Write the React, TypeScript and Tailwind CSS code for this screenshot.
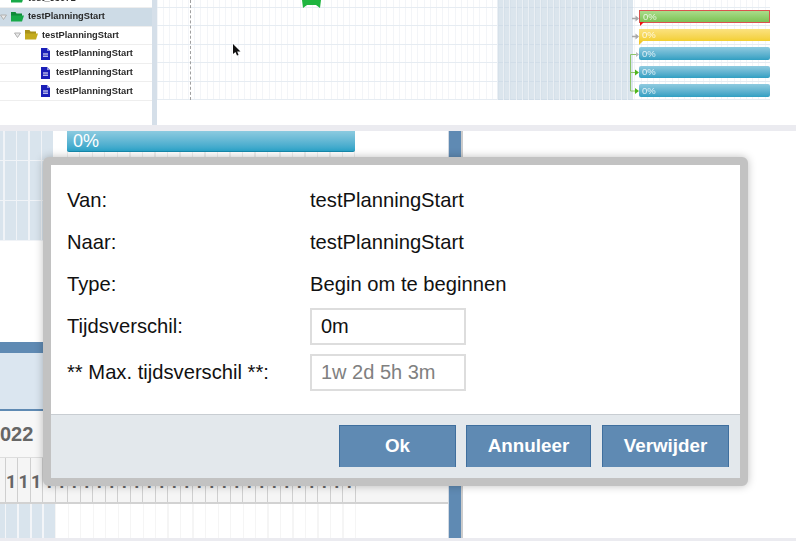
import React from "react";

const ganttBars = [
  { cls: "bg-gradient-to-b from-[#a9dc8a] to-[#7cc253] border border-[#d9534f]", flag: "border-t-[#f01010]" },
  { cls: "bg-gradient-to-b from-[#fbe27e] to-[#f3cf2e]", flag: "border-t-[#f3c52a]" },
  { cls: "bg-gradient-to-b from-[#8fcbe0] to-[#2f9fc2] rounded-[2px]", flag: "" },
  { cls: "bg-gradient-to-b from-[#8fcbe0] to-[#2f9fc2] rounded-[2px]", flag: "" },
  { cls: "bg-gradient-to-b from-[#8fcbe0] to-[#2f9fc2] rounded-[2px]", flag: "" },
];

function Caret() {
  return (
    <svg width="7" height="6" viewBox="0 0 7 6" className="shrink-0">
      <path d="M.5 1h6L3.500 5.500z" fill="#e8e8e8" stroke="#b0b0b0" strokeWidth="1" />
    </svg>
  );
}

function FolderOpen({ color, dark }: { color: string; dark: string }) {
  return (
    <svg width="13" height="10" viewBox="0 0 13 10" className="shrink-0">
      <path d="M0 0h4.500l1 1.500H11V4H0z" fill={dark} />
      <path d="M0 9.500V3.500h13L11 9.500z" fill={color} />
    </svg>
  );
}

function DocIcon() {
  return (
    <svg width="9" height="12" viewBox="0 0 9 12" className="mr-[2px] shrink-0">
      <path d="M0 0h6l3 3v9H0z" fill="#1a1fb8" />
      <path d="M6 0l3 3H6z" fill="#8f92e0" />
      <path d="M2 6h5M2 8.200h5" stroke="#ffffff" strokeWidth="1" />
    </svg>
  );
}

function TreeRow({
  indent,
  icon,
  selected,
  label = "testPlanningStart",
}: {
  indent: string;
  icon: React.ReactNode;
  selected?: boolean;
  label?: string;
}) {
  return (
    <div
      className={`flex h-[18.6px] items-center gap-[4px] border-b border-[#eeeeee] ${indent} ${
        selected ? "bg-[#cddbe6]" : "bg-white"
      }`}
    >
      {icon}
      <span className="text-[9.3px] font-bold leading-none text-[#2a2a2a]">{label}</span>
    </div>
  );
}

function Tree() {
  return (
    <div className="w-[152px] shrink-0 overflow-hidden bg-white">
      <div className="-mt-[10.6px]">
        <TreeRow
          indent="pl-[11px]"
          icon={<FolderOpen color="#17a948" dark="#0f8a38" />}
          label="test_95071"
        />
        <TreeRow
          indent="pl-0"
          selected
          icon={
            <>
              <Caret />
              <FolderOpen color="#17a948" dark="#0f8a38" />
            </>
          }
        />
        <TreeRow
          indent="pl-[14px]"
          icon={
            <>
              <Caret />
              <FolderOpen color="#c4ab1e" dark="#a9921a" />
            </>
          }
        />
        <TreeRow indent="pl-[41px]" icon={<DocIcon />} />
        <TreeRow indent="pl-[41px]" icon={<DocIcon />} />
        <TreeRow indent="pl-[41px]" icon={<DocIcon />} />
      </div>
    </div>
  );
}

function TopChart() {
  return (
    <div className="relative flex-1 bg-white">
      <div className="relative h-[100px] w-[613px] overflow-hidden bg-[repeating-linear-gradient(90deg,#f3f5f8_0,#f3f5f8_1px,transparent_1px,transparent_6.2px)]">
        <div className="h-[8px] border-b border-[#e6ecf2]" />
        {ganttBars.map((bar, i) => (
          <div key={i} className="relative flex h-[18.4px] items-center border-b border-[#e6ecf2]">
            <div className={`relative z-10 ml-[482px] flex h-[12.5px] w-[131px] items-center pl-[3px] text-[9.500px] leading-none text-white/80 ${bar.cls}`}>
              0%
              {bar.flag && (
                <span className={`absolute -bottom-[4px] left-0 h-0 w-0 border-t-[4px] border-r-[4px] border-r-transparent ${bar.flag}`} />
              )}
            </div>
          </div>
        ))}
        <div className="absolute bottom-0 left-[340px] top-0 w-[136px] bg-[#c3d3e1]/60 bg-[repeating-linear-gradient(90deg,#eaeff4_0,#eaeff4_1px,transparent_1px,transparent_6.2px)]" />
        <div className="absolute bottom-0 left-[33px] top-0 border-l border-dashed border-[#a0a0a0]" />
        <svg className="absolute left-[144px] top-0" width="21" height="9" viewBox="0 0 21 9">
          <path d="M1 0h19l-1 8-4-3H6l-4 3z" fill="#1fb53f" />
        </svg>
        {/* dependency links */}
        <svg className="absolute left-[470px] top-0 z-20" width="14" height="100" viewBox="0 0 14 100" fill="none">
          <path d="M5 18.500h6M5 36.500h6" stroke="#a8a8a8" strokeWidth="1.500" />
          <path d="M8.500 15.500l3.500 3-3.500 3zM8.500 33.500l3.500 3-3.500 3z" fill="#a8a8a8" />
          <path d="M10 54.500H3.500V91H10M3.500 72.500H10" stroke="#8cc56a" strokeWidth="1" />
          <path d="M9 52l3 2.500-3 2.500z" fill="#b8b8b8" />
          <path d="M8 69.500l4 3-4 3zM8 88l4 3-4 3z" fill="#4fb61c" />
        </svg>
        <svg className="absolute left-[76px] top-[44px] z-20" width="8" height="13" viewBox="0 0 8 13">
          <path d="M0 0v10l2.500-2 1.500 3.500 1.500-.6L4.200 7.500H7.500z" fill="#111111" />
        </svg>
      </div>
    </div>
  );
}

function LowerPane() {
  const ticks = Array.from({ length: 28 });
  return (
    <div className="flex w-[448px] shrink-0 flex-col overflow-hidden bg-white">
      {/* bar row of the lower gantt */}
      <div className="flex h-[110px] shrink-0">
        <div className="h-full w-[53px] shrink-0 bg-[#d9e4ed] bg-[repeating-linear-gradient(90deg,#f0f3f7_3px,#f0f3f7_4.500px,transparent_4.500px,transparent_15.500px),repeating-linear-gradient(0deg,#f0f3f7_0,#f0f3f7_1.500px,transparent_1.500px,transparent_40px)]" />
        <div className="ml-[14px] h-[26px] w-[288px] bg-[repeating-linear-gradient(90deg,#eeeeee_0,#eeeeee_1px,transparent_1px,transparent_12.500px)]">
          <div className="flex h-[21px] items-center rounded-b-[2px] border-b border-[#1688ab] bg-gradient-to-b from-[#8ccbe0] to-[#2aa3c8] pl-[6px] text-[18px] leading-none text-white">
            0%
          </div>
        </div>
      </div>
      <div className="h-[101px] shrink-0" />
      <div className="h-[11px] shrink-0 bg-[#5f8ab3]" />
      <div className="h-[58px] shrink-0 border-b-2 border-[#5f8ab3] bg-[#dbe6f0]" />
      <div className="flex h-[46px] shrink-0 items-center overflow-hidden bg-[#f7f7f7]">
        <span className="text-[20px] font-bold leading-none text-[#666666]">022</span>
      </div>
      <div className="flex h-[47px] shrink-0 border-t border-b-2 border-t-[#dddddd] border-b-[#d2d2d2] bg-[#f5f5f5]">
        <div className="h-full w-[5.5px] shrink-0 border-r border-[#cfcfcf]" />
        {ticks.map((_, i) => (
          <div
            key={i}
            className="flex h-full w-[12.5px] shrink-0 items-center justify-center overflow-hidden border-r border-[#cfcfcf] pt-[4px] font-['Roboto',sans-serif] text-[18px] font-bold leading-none text-[#666666]"
          >
            1
          </div>
        ))}
      </div>
      <div className="flex h-[35px] shrink-0">
        <div className="h-full w-[55px] shrink-0 bg-[#d9e4ed] bg-[repeating-linear-gradient(90deg,#f3f5f8_5px,#f3f5f8_6.500px,transparent_6.500px,transparent_17.500px)]" />
        <div className="h-full w-[301px] bg-[repeating-linear-gradient(90deg,#f5f5f5_0,#f5f5f5_1px,transparent_1px,transparent_12.500px)]" />
      </div>
    </div>
  );
}

function FieldRow({ label, children }: { label: string; children: React.ReactNode }) {
  return (
    <>
      <div className="flex items-center text-[20.2px] text-[#111111]">{label}</div>
      <div className="flex items-center whitespace-nowrap text-[20.2px] text-[#111111]">{children}</div>
    </>
  );
}

function DialogButton({ label, width }: { label: string; width: string }) {
  return (
    <button
      className={`h-[42px] ${width} border border-b-0 border-[#3f6f9e] bg-[#5f8ab3] text-[18.8px] font-bold text-white`}
    >
      {label}
    </button>
  );
}

function Dialog() {
  return (
    <div className="absolute left-[43px] top-[157px] flex h-[329px] w-[705px] flex-col rounded-[6px] border-[8px] border-[#c2c2c2] bg-white shadow-[0_0_8px_rgba(0,0,0,0.25)]">
      <div className="grid flex-1 grid-cols-[243px_156px] grid-rows-[42px_42px_42px_42px_45px] px-[16px] pt-[14px]">
        <FieldRow label="Van:">testPlanningStart</FieldRow>
        <FieldRow label="Naar:">testPlanningStart</FieldRow>
        <FieldRow label="Type:">Begin om te beginnen</FieldRow>
        <FieldRow label="Tijdsverschil:">
          <input
            readOnly
            value="0m"
            className="h-[37px] w-[156px] border-2 border-[#dddddd] bg-white px-[9px] text-[20px] text-[#111111] outline-none"
          />
        </FieldRow>
        <div className="mt-[6px] flex items-center whitespace-nowrap text-[20.2px] text-[#111111]">** Max. tijdsverschil **:</div>
        <div className="mt-[6px] flex items-center">
          <input
            readOnly
            placeholder="1w 2d 5h 3m"
            className="h-[37px] w-[156px] border-2 border-[#dddddd] bg-white px-[9px] text-[20px] text-[#111111] outline-none placeholder:text-[#808080]"
          />
        </div>
      </div>
      <div className="flex h-[64px] shrink-0 justify-end gap-[10px] border-t border-[#c8cdd2] bg-[#e3e8ec] pr-[11px] pt-[10px]">
        <DialogButton label="Ok" width="w-[117px]" />
        <DialogButton label="Annuleer" width="w-[125px]" />
        <DialogButton label="Verwijder" width="ml-[1px] w-[127px]" />
      </div>
    </div>
  );
}

export default function App() {
  return (
    <div className="relative h-[541px] w-[796px] overflow-hidden bg-white font-['Liberation_Sans',sans-serif]">
      <div className="flex h-[125px] bg-white blur-[0.4px]">
        <Tree />
        <div className="w-[5px] shrink-0 bg-[#d5dfe9]" />
        <TopChart />
      </div>
      <div className="h-[6px] bg-[#ebebf0]" />
      <div className="flex h-[407px]">
        <LowerPane />
        <div className="w-[15px] shrink-0 border-r-2 border-l border-l-[#d2d9e2] border-r-[#cccccc] bg-[#5f8ab3]" />
        <div className="flex-1 bg-white" />
      </div>
      <div className="h-[3px] bg-[#ebebf0]" />
      <Dialog />
    </div>
  );
}
